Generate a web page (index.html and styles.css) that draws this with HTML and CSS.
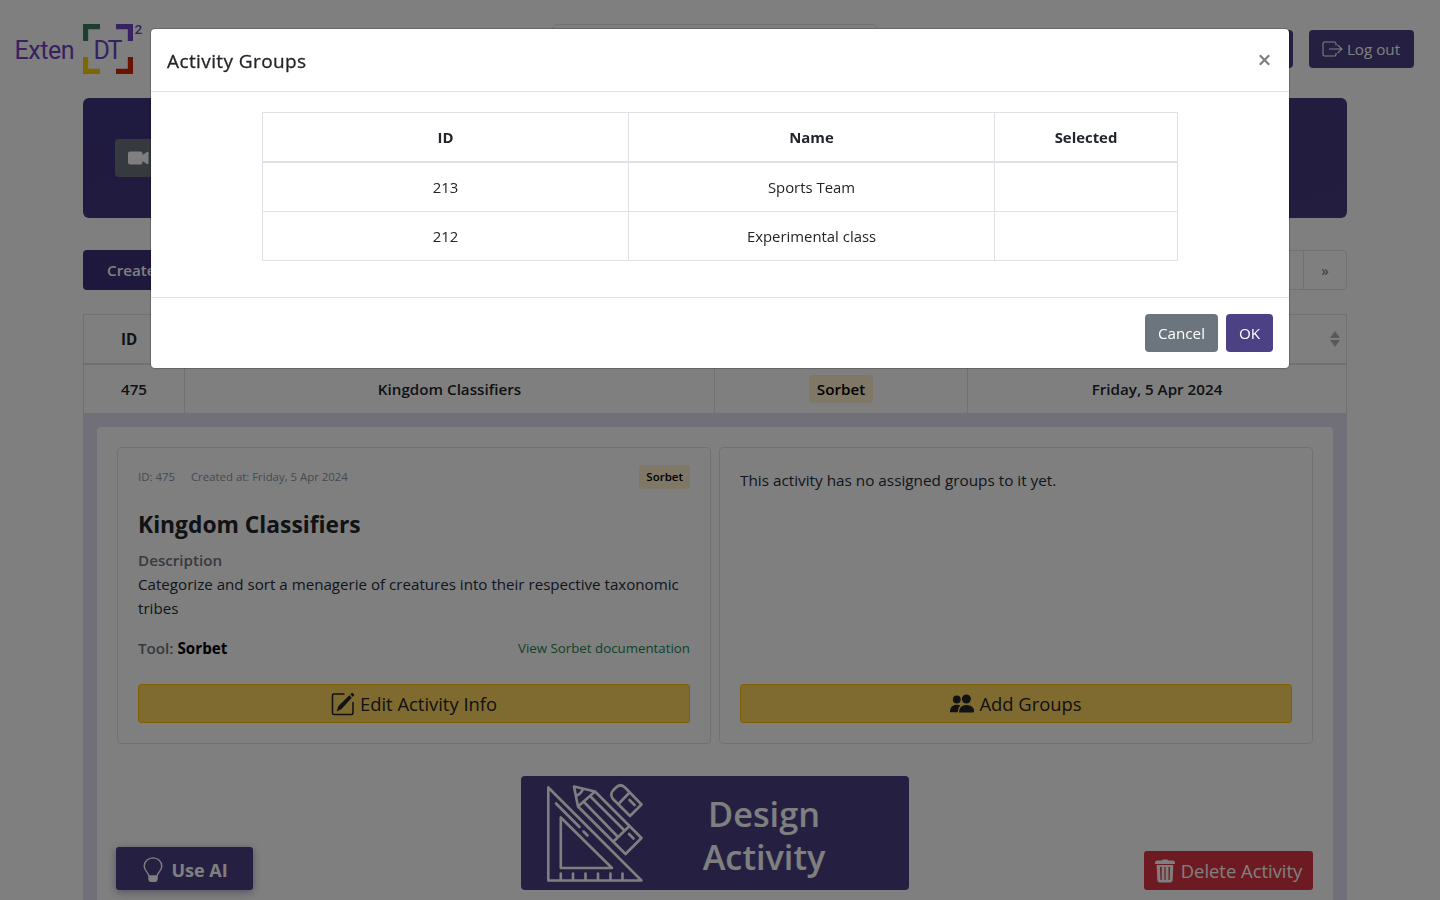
FILE: index.html
```html
<!DOCTYPE html>
<html lang="en">
<head>
<meta charset="utf-8">
<title>ExtenDT² – Activities</title>
<link rel="stylesheet" href="styles.css">
</head>
<body>
<div class="page">
  <header class="topbar">
    <svg class="logo" width="132" height="54" viewBox="0 0 132 54">
      <g fill="none" stroke-width="5.2">
        <path stroke="#3c7e60" d="M70.600 19V4.600H85"/>
        <path stroke="#6f42c1" d="M101 4.600h14.400V19"/>
        <path stroke="#f8d000" d="M70.600 35v14.400H85"/>
        <path stroke="#d42600" d="M101 49.400h14.400V35"/>
      </g>
      <text class="logo-text" x="-0.500" y="36.500" textLength="60">Exten</text>
      <text class="logo-text" x="78.500" y="36.500" textLength="29">DT</text>
      <text class="logo-sup" x="119.500" y="11.500">2</text>
    </svg>
    <div class="search"></div>
    <div class="topbar-actions">
      <div class="btn btn-primary btn-profile"></div>
      <div class="btn btn-primary btn-logout">
        <svg width="21" height="17" viewBox="0 0 21 17" fill="none" stroke="currentColor" stroke-width="1.100"><path d="M14 4.500V2.500a1.500 1.500 0 0 0-1.500-1.500H2.500A1.500 1.500 0 0 0 1 2.500v11A1.500 1.500 0 0 0 2.500 15h10a1.500 1.500 0 0 0 1.500-1.500V12M7 8h13M15.500 3.800 20 8l-4.500 4.200"/></svg>
        <span>Log out</span>
      </div>
    </div>
  </header>

  <main class="content">
    <section class="banner">
      <div class="btn btn-secondary btn-video">
        <svg width="21" height="14" viewBox="0 0 21 14" fill="currentColor"><path d="M2 .5h10.500a2 2 0 0 1 2 2V4L18.500 1.200Q20.500 0 20.500 2v10q0 2-2 .8L14.500 10v1.500a2 2 0 0 1-2 2H2a2 2 0 0 1-2-2v-9a2 2 0 0 1 2-2z"/></svg>
      </div>
    </section>

    <div class="toolbar">
      <div class="btn-create">Create Activity</div>
      <div class="pagination"><span class="page-item"></span><span class="page-item">»</span></div>
    </div>

    <div class="list">
      <div class="row head"><div class="cell">ID</div><div class="cell"></div><div class="cell"></div><div class="cell">
        <svg width="10" height="16" viewBox="0 0 10 16" fill="#b3b3b3"><path d="M5 0l5 7H0zM0 9h10l-5 7z"/></svg></div></div>
      <div class="row"><div class="cell">475</div><div class="cell">Kingdom Classifiers</div><div class="cell"><span class="badge">Sorbet</span></div><div class="cell">Friday, 5 Apr 2024</div></div>
      <div class="details">
        <div class="panel">
          <div class="cards">
            <article class="card">
              <div class="meta"><span>ID: 475</span><span>Created at: Friday, 5 Apr 2024</span><span class="badge badge-sm">Sorbet</span></div>
              <h2 class="title">Kingdom Classifiers</h2>
              <div class="label">Description</div>
              <p class="desc">Categorize and sort a menagerie of creatures into their respective taxonomic<br>tribes</p>
              <div class="tool"><span><span class="label">Tool:</span> <b>Sorbet</b></span><a class="doc">View Sorbet documentation</a></div>
              <div class="btn-warning">
                <svg width="24" height="24" viewBox="0 0 24 24" fill="none" stroke="currentColor" stroke-width="1.500"><path d="M13.500 2H3a1.500 1.500 0 0 0-1.500 1.500V21A1.500 1.500 0 0 0 3 22.500h17.500A1.500 1.500 0 0 0 22 21V10"/><path fill="currentColor" stroke="none" d="M18.400 3.300l2.400 2.400L10.500 17l-5 2.500L7.500 14zM19.300 2.300l1.100-1.100q.7-.7 1.400 0l1.100 1.100q.7.700 0 1.400l-1.200 1.100z"/></svg>
                <span>Edit Activity Info</span>
              </div>
            </article>
            <article class="card">
              <p class="empty">This activity has no assigned groups to it yet.</p>
              <div class="btn-warning">
                <svg width="24" height="20" viewBox="0 0 24 20" fill="currentColor"><circle cx="6.800" cy="5.500" r="3.900"/><circle cx="16.400" cy="5" r="4.500"/><path d="M0 18.300C0 13 3 10.800 6.800 10.800q2 0 3.400.8Q7.700 14 7.700 18.300zM9 18.500Q9 11 16.500 11T24 17.500q0 1-1 1z"/></svg>
                <span>Add Groups</span>
              </div>
            </article>
          </div>
          <div class="actions">
            <div class="use-ai">
              <svg width="20" height="26" viewBox="0 0 20 26" fill="none" stroke="currentColor" stroke-width="1.400"><path d="M6 19C5.500 15.500 1.200 13.500 1.200 9.300a8.700 8.300 0 0 1 17.600 0C18.800 13.500 14.500 15.500 14 19z"/><path fill="currentColor" stroke="none" d="M5.300 19h9.400v4l-1.700 2H7l-1.700-2z"/></svg>
              <span>Use AI</span>
            </div>
            <div class="design">
              <svg width="98" height="100" viewBox="0 0 98 100" fill="none" stroke="currentColor" stroke-width="2.600" stroke-linejoin="round" stroke-linecap="round">
                <path d="M2.300 4.500v93H95.500zM14.800 34.500v50.500H66z"/>
                <path d="M14.800 96.500v-6M27 96.500v-6M39.500 96.500v-6M52 96.500v-6M64.500 96.500v-6M76.500 96.500v-6M10 20.500l23.500 23.500M37.500 48.500l4 4"/>
                <path d="M28 3.500l21 5L95.500 55 79.500 71 32 23.500zM49 8.500l-17 15M30.500 12.500q4.500-1.500 6.500-6.500M44.500 13.500l33 33M38 19l33 34M67.500 58.500l16-15.500M83 51l4.500 4.500"/>
                <path d="M95.500 21.500L84 33 67 16q-3.500-4.500 0-8.500l3-3q4.500-4.500 9 0zM72.500 21l11-11.500M83.500 17l5 5"/>
              </svg>
              <div class="design-label"><span>Design</span><span>Activity</span></div>
            </div>
            <div class="delete">
              <svg width="20" height="24" viewBox="0 0 20 24" fill="currentColor" fill-rule="evenodd"><path d="M7 1.500Q7 .5 8 .5h4q1 0 1 1h5q2 0 2 2.500v1H0V4q0-2.500 2-2.500zM1.700 6h16.600l-.6 14.500q-.2 3-2.700 3H5q-2.500 0-2.700-3zM5 8l.5 13h1.200V8zM9.400 8v13h1.200V8zM13.500 8v13h1.200L15 8z"/></svg>
              <span>Delete Activity</span>
            </div>
          </div>
        </div>
      </div>
    </div>
  </main>
</div>

<div class="backdrop">
  <div class="modal">
    <div class="modal-header"><h5 class="modal-title">Activity Groups</h5><svg width="11" height="12" viewBox="0 0 11 12" stroke="#7f7f7f" stroke-width="2.200"><path d="M.8 1.200l9.400 9.600M10.200 1.200L.8 10.800"/></svg></div>
    <div class="modal-body">
      <table class="groups">
        <thead><tr><th class="wide">ID</th><th class="wide">Name</th><th>Selected</th></tr></thead>
        <tbody>
          <tr><td>213</td><td>Sports Team</td><td></td></tr>
          <tr><td>212</td><td>Experimental class</td><td></td></tr>
        </tbody>
      </table>
    </div>
    <div class="modal-footer"><div class="btn btn-secondary btn-cancel">Cancel</div><div class="btn btn-ok">OK</div></div>
  </div>
</div>
</body>
</html>
```
FILE: styles.css
```css
* { box-sizing: border-box; }
body { margin: 0; background: #fff; color: #212529; font: 400 15.2px/24px "Open Sans", "Noto Sans", sans-serif; }
p, h2, h5 { margin: 0; }
svg { flex: none; }
.page { height: 900px; overflow: hidden; }

.topbar { display: flex; align-items: flex-start; height: 98px; padding: 22px 26px 0 15px; }
.logo { overflow: visible; }
.logo-text { font: 400 25px Roboto, sans-serif; fill: #6f42c1; }
.logo-sup { font: 500 13.5px Roboto, sans-serif; fill: #6f42c1; }
.search { width: 326px; height: 50px; margin: 2px 0 0 405px; border: 1px solid #dee2e6; border-radius: 6px; }
.topbar-actions { display: flex; gap: 16px; margin: 8px 0 0 auto; }
.btn { display: flex; align-items: center; justify-content: center; height: 38px; border-radius: 4px; color: #fff; }
.btn-primary, .btn-ok { background: #4b4184; }
.btn-secondary { background: #6c757d; }
.btn-profile { width: 120px; }
.btn-logout { width: 105px; gap: 4px; padding-right: 1px; }

.content { width: 1264px; margin-left: 83px; }
.banner { display: flex; align-items: center; height: 120px; padding-left: 32px; border-radius: 6px; background: linear-gradient(165deg, #3f347e, #463c7e); }
.btn-video { width: 140px; justify-content: flex-start; padding-left: 13px; }
.toolbar { display: flex; justify-content: space-between; height: 40px; margin: 32px 0 24px; }
.btn-create { width: 170px; padding: 8px 24px; border-radius: 4px; background: #3a3078; color: #fff; font-weight: 600; white-space: nowrap; }
.pagination { display: flex; width: 132px; border: 1px solid #dee2e6; border-radius: 4px; }
.page-item { flex: 1; display: flex; align-items: center; justify-content: center; color: #6c757d; }
.page-item + .page-item { flex: 0 0 43px; border-left: 1px solid #dee2e6; }

.row { display: grid; grid-template-columns: 101px 530px 253px 1fr; height: 48px; border-right: 1px solid #dee2e6; font-weight: 600; }
.head { height: 51px; border-top: 1px solid #dee2e6; border-bottom: 2px solid #dee2e6; font-weight: 700; }
.cell { display: flex; align-items: center; justify-content: center; border-left: 1px solid #dee2e6; }
.head .cell:first-child { justify-content: flex-start; padding-left: 37px; }
.head .cell:last-child { justify-content: flex-end; padding-right: 6px; }
.badge { padding: 2px 8px; border-radius: 4px; background: #fff0cf; color: #000; }
.details { height: 500px; padding: 14px 14px 0; background: #e2deee; }
.panel { height: 520px; padding: 20px; border-radius: 4px; background: #fff; }
.cards { display: grid; grid-template-columns: 1fr 1fr; gap: 8px; height: 297px; }
.card { display: flex; flex-direction: column; padding: 15px 20px 20px; border: 1px solid #dee2e6; border-radius: 4px; }
.meta { display: flex; gap: 16px; align-items: center; height: 26px; font-size: 11.4px; color: #8b93a5; padding-top: 1px; }
.badge-sm { margin-left: auto; padding: 0 7px; border-radius: 3px; font-size: 11.5px; font-weight: 600; }
.title { margin-top: 21px; font-size: 22.8px; line-height: 30px; font-weight: 700; }
.label { color: #6c757d; font-weight: 600; }
.title + .label { margin-top: 8px; }
.desc, .empty { color: #252b3a; }
.desc { font-size: 15.14px; }
.empty { padding-top: 5px; font-size: 15.3px; }
.tool { display: flex; justify-content: space-between; align-items: center; margin-top: 16px; }
.tool b { color: #000; }
.doc { color: #198754; font-size: 13.3px; }
.btn-warning { display: flex; align-items: center; justify-content: center; gap: 5px; height: 39px; margin-top: auto; border: 1px solid #ffc107; border-radius: 3px; background: #ffd65e; font-size: 18.4px; }
.actions { display: flex; align-items: flex-end; justify-content: space-between; height: 114px; margin-top: 32px; color: #fff; }
.use-ai, .delete { display: flex; align-items: center; justify-content: center; border-radius: 3px; }
.use-ai { width: 137px; height: 43px; gap: 8px; padding: 2px 0 0 2px; margin-left: -1px; background: #4b4184; box-shadow: 0 2px 8px #4b418480; font-size: 18px; font-weight: 700; }
.design { display: flex; align-items: center; width: 388px; height: 114px; padding-left: 25px; margin-left: 32px; border-radius: 4px; background: #4b4184; }
.design-label { flex: 1; display: flex; flex-direction: column; align-items: center; padding: 4px 24px 0 0; font-size: 34.3px; line-height: 43px; font-weight: 600; }
.delete { width: 169px; height: 39px; gap: 6px; background: #dc3545; font-size: 18.4px; }

.backdrop { position: fixed; inset: 0; padding-top: 28px; background: rgba(0, 0, 0, .5); }
.modal { width: 1140px; height: 341px; margin: 0 auto; display: flex; flex-direction: column; border: 1px solid rgba(0, 0, 0, .2); border-radius: 5px; background: #fff; background-clip: padding-box; }
.modal-header { display: flex; align-items: center; justify-content: space-between; height: 63px; padding: 0 19px 0 16px; border-bottom: 1px solid #dee2e6; }
.modal-title { font-size: 19px; font-weight: 500; line-height: 30px; letter-spacing: .4px; padding-top: 2px; -webkit-text-stroke: .3px; }
.modal-body { flex: 1; padding-top: 20px; }
.groups { width: 916px; margin: 0 auto; border-collapse: collapse; table-layout: fixed; text-align: center; font-size: 14.9px; }
.groups th, .groups td { height: 49px; padding: 0; border: 1px solid #dee2e6; }
.groups th { border-bottom-width: 2px; font-weight: 700; }
.groups tbody tr:first-child td { height: 50px; }
.groups .wide { width: 366px; }
.modal-footer { display: flex; justify-content: flex-end; gap: 8px; height: 71px; padding: 16px; border-top: 1px solid #dee2e6; }
.btn-cancel { width: 73px; }
.btn-ok { width: 47px; }
```
